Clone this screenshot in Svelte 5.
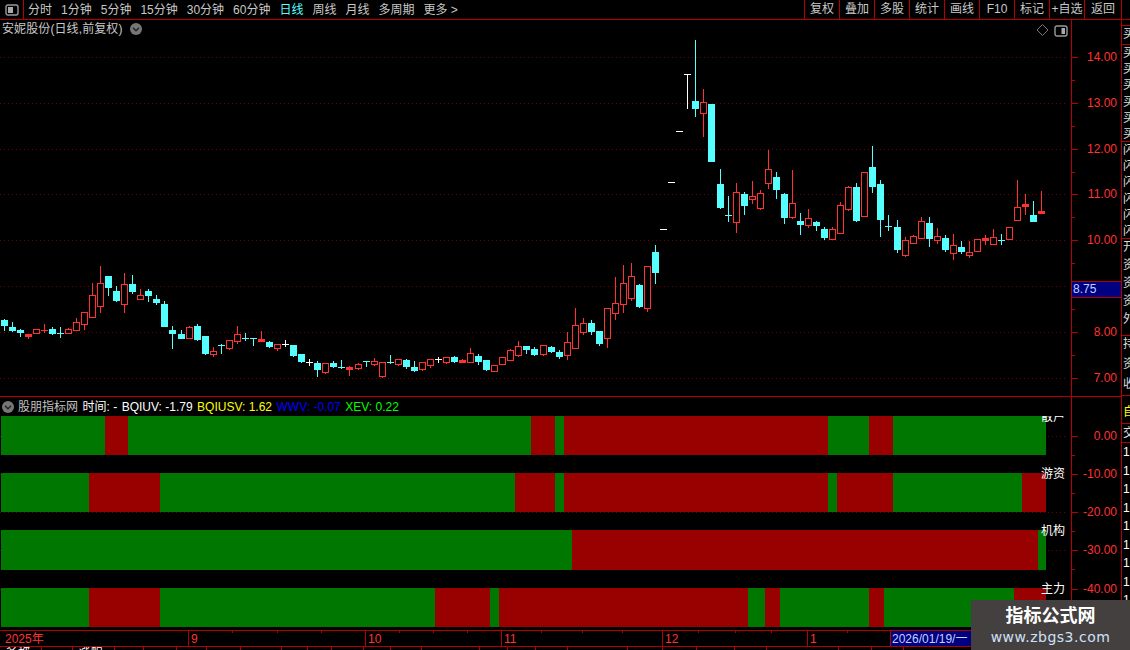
<script>
  const tabs = [
    ['分时', 0], ['1分钟', 0], ['5分钟', 0], ['15分钟', 0], ['30分钟', 0], ['60分钟', 0],
    ['日线', 1], ['周线', 0], ['月线', 0], ['多周期', 0], ['更多 >', 0]
  ];
  const actions = ['复权', '叠加', '多股', '统计', '画线', 'F10', '标记', '+自选', '返回'];

  // [x, colour, wick top, body top, body bottom, wick bottom]
  const candles = [
    [4,'c',319,320,325,330],[12,'c',322,327,330,331],[20,'c',329,330,332,336],[28,'r',334,334,336,338],
    [36,'r',329,329,333,333],[44,'r',324,330,330,332],[52,'c',327,329,333,334],[60,'c',327,333,333,337],
    [68,'r',328,329,333,333],[76,'r',318,322,330,330],[84,'r',312,312,324,329],[92,'r',283,295,317,317],
    [100,'r',266,283,306,312],[108,'c',276,276,287,295],[116,'c',286,291,300,301],[124,'r',273,284,304,312],
    [132,'c',275,284,291,293],[140,'r',289,295,299,299],[148,'c',289,291,295,301],[156,'c',295,299,302,304],
    [164,'c',301,304,326,326],[172,'c',326,330,333,348],[181,'c',330,334,338,338],[189,'r',326,327,338,338],
    [197,'c',324,326,339,340],[205,'c',336,336,353,354],[213,'r',347,351,354,356],[221,'c',344,345,345,353],
    [229,'r',340,340,348,349],[237,'r',326,334,341,343],[245,'c',333,338,338,340],[253,'c',338,338,338,345],
    [261,'r',331,339,341,341],[269,'c',341,342,346,347],[277,'r',344,344,348,350],[285,'w',340,344,344,346],
    [293,'c',345,345,355,356],[301,'c',354,354,361,362],[309,'w',359,362,362,365],[317,'c',361,363,369,376],
    [325,'r',363,363,372,373],[333,'c',361,363,366,367],[341,'c',360,367,367,368],[349,'r',366,367,369,375],
    [358,'r',363,364,368,369],[366,'c',361,361,361,366],[374,'r',358,361,364,365],[382,'r',362,362,376,377],
    [390,'c',355,362,362,363],[398,'r',359,359,364,365],[406,'c',359,360,366,368],[414,'c',361,367,370,371],
    [422,'r',362,362,369,370],[430,'r',359,359,365,367],[438,'w',357,359,359,362],[446,'r',357,357,362,363],
    [454,'c',356,357,361,362],[462,'r',359,360,362,362],[470,'r',348,353,362,362],[478,'c',354,356,361,364],
    [486,'c',360,360,369,370],[494,'r',365,365,371,371],[502,'r',357,357,364,364],[510,'r',349,350,360,360],
    [518,'r',341,346,355,356],[526,'c',346,346,349,353],[534,'c',347,349,354,355],[543,'r',345,345,354,355],
    [551,'c',346,347,351,352],[559,'c',350,352,356,358],[567,'r',332,342,355,359],[575,'r',308,325,348,348],
    [583,'r',318,323,332,334],[591,'c',320,323,331,334],[599,'c',331,331,343,345],[607,'r',308,308,338,347],
    [615,'r',277,303,313,319],[623,'r',265,283,304,312],[631,'r',263,276,298,300],[639,'c',284,285,306,307],
    [647,'r',266,266,308,311],[655,'c',245,252,272,283],[663,'w',229,229,229,229],[671,'w',182,182,182,182],
    [679,'w',131,131,131,131],[687,'w',74,74,74,108],[695,'c',40,101,108,116],[703,'r',89,102,113,136],
    [711,'c',104,104,161,161],[720,'c',169,184,207,208],[728,'c',196,215,215,221],[736,'r',183,192,222,232],
    [744,'c',192,194,205,214],[752,'r',181,196,199,203],[760,'r',190,193,208,209],[768,'r',150,169,183,188],
    [776,'c',172,177,189,198],[784,'c',193,194,217,223],[792,'r',170,203,217,218],[800,'c',213,221,224,234],
    [808,'r',209,218,225,227],[816,'c',221,222,225,230],[824,'c',227,229,237,239],[832,'r',227,229,239,239],
    [840,'r',202,205,233,233],[848,'r',186,187,209,210],[856,'c',183,187,220,221],[864,'r',172,172,216,216],
    [872,'c',146,167,186,192],[880,'c',180,184,219,236],[888,'c',215,226,226,230],[897,'c',220,227,249,252],
    [905,'r',237,240,255,256],[913,'r',235,236,243,243],[921,'r',217,221,238,238],[929,'c',217,223,238,246],
    [937,'r',228,236,240,243],[945,'c',235,238,249,251],[953,'r',234,245,253,259],[961,'c',241,247,251,253],
    [969,'r',241,252,255,257],[977,'r',239,239,251,251],[985,'r',235,238,240,244],[993,'r',229,237,244,244],
    [1001,'c',234,240,240,244],[1009,'r',227,227,239,239],[1017,'r',180,207,220,220],[1025,'r',194,204,206,214],
    [1033,'c',201,215,221,221],[1041,'r',191,211,213,213]
  ];
  const ink = { c: '#55ffff', r: '#ff3232', w: '#ffffff' };

  const upperTicks = [
    [14, 57], [13, 103], [12, 149], [11, 194], [10, 240], [9, 286], [8, 332], [7, 378]
  ].map(([v, y]) => ({ label: v.toFixed(2), y }));
  const lowerTicks = [0, -10, -20, -30, -40].map((v, i) => ({ label: v.toFixed(2), y: 38.25 * i + 38.5 }));

  const flows = [
    [104, 127, 530, 554, 563, 827, 868, 892, 1045],
    [88, 159, 514, 554, 563, 827, 836, 892, 1021, 1045],
    [571, 1037, 1045],
    [88, 159, 434, 489, 498, 747, 764, 779, 868, 883, 1013, 1045]
  ];
  const rows = flows.map((ends) => ends.map((end, i) => ({
    width: end - (i ? ends[i - 1] : 0),
    tone: i % 2 ? 'loss' : 'gain'
  })));
  const tags = [['散户', 417], ['游资', 474], ['机构', 531], ['主力', 589]];

  const months = [['2025年', 188], ['9', 177], ['10', 136], ['11', 161], ['12', 145], ['1', 83]];
  const dateTicks = [232, 277, 321, 399, 433, 467, 541, 582, 622, 698, 735, 771, 847];
  const footerCells = [
    [42, '名称', ''], [31, '', ''], [42, '涨幅', ''], [29, '', ''], [33, '', ''], [30, '', ''], [34, '', ''],
    [41, '', ''], [26, '', ''], [24, '', ''], [32, '', ''], [27, '', ''], [31, '', ''], [58, '', ''],
    [28, '', ''], [28, '', ''], [32, '', ''], [60, '', ''], [35, '', ''], [34, '', ''], [38, '', ''],
    [32, '', ''], [72, '', ''], [33, '', ''], [32, '', ''], [72, '', '']
  ];
  const sideGroups = [
    { h: 20, row: 18, chars: '买' },
    { h: 97, row: 16.2, chars: '买买买买买买' },
    { h: 97, row: 16.2, chars: '闪闪闪闪闪闪' },
    { h: 97, row: 18, chars: '开资资资外' },
    { h: 60, row: 20, chars: '持资收' }
  ];
  const lowerSide = ['1', '1', '1', '1', '1', '1', '1', '1', '1'];
</script>

{#snippet panelIcon(x, y)}
  <svg class="icon" width="14" height="12" viewBox="0 0 14 12" style={`left:${x}px;top:${y}px`}>
    <rect x="1" y="1" width="12" height="10" rx="2" fill="none" stroke="#999" stroke-width="1.4" />
    <rect x="7.5" y="3" width="3.5" height="6" fill="#aaa" />
  </svg>
{/snippet}

{#snippet chevron()}
  <svg class="chev" width="12" height="12" viewBox="0 0 12 12">
    <circle cx="6" cy="6" r="6" fill="#777" />
    <path d="M3 4.8 6 7.8 9 4.8" fill="none" stroke="#222" stroke-width="1.4" />
  </svg>
{/snippet}

<div class="app">
  <header class="toolbar">
    <div class="toggle">
      <svg width="14" height="12" viewBox="0 0 14 12">
        <rect x="1" y="1" width="12" height="10" rx="2" fill="none" stroke="#999" stroke-width="1.4" />
        <rect x="3" y="3" width="5" height="6" fill="#aaa" />
      </svg>
    </div>
    <nav class="tabs">
      {#each tabs as [label, active]}
        <span class:active>{label}</span>
      {/each}
    </nav>
    <div class="actions">
      {#each actions as label}
        <span>{label}</span>
      {/each}
    </div>
  </header>

  <div class="body">
    <div class="panes">
      <section class="pane upper">
        <div class="plot">
          <div class="title">
            <span>安妮股份(日线,前复权)</span>
            {@render chevron()}
          </div>
          <svg class="canvas" width="1071" height="376" viewBox="0 20 1071 376">
            {#each upperTicks as t}
              <line class="grid" x1="0" x2="1068" y1={t.y + 0.5} y2={t.y + 0.5} />
            {/each}
            {#each candles as [x, k, wt, bt, bb, wb]}
              <line x1={x + 0.5} x2={x + 0.5} y1={wt} y2={wb + 1} stroke={ink[k]} />
              {#if bb - bt < 1}
                <rect x={x - 3} y={bt} width="7" height="1" fill={ink[k]} />
              {:else if k === 'c' || bb - bt < 3}
                <rect x={x - 3} y={bt} width="7" height={bb - bt + 1} fill={ink[k]} />
              {:else}
                <rect x={x - 2.5} y={bt + 0.5} width="6" height={bb - bt} fill="#000" stroke={ink[k]} />
              {/if}
            {/each}
            <path class="diamond" d="M1042.5 24.5 1048 30 1042.5 35.5 1037 30Z" />
          </svg>
          {@render panelIcon(1054, 5)}
        </div>
        <div class="axis">
          {#each upperTicks as t, i}
            <i class="tick" style={`top:${t.y - 20}px`}></i>
            {#if i < upperTicks.length - 1}
              <i class="tick minor" style={`top:${t.y + 23 - 20}px`}></i>
            {/if}
            {#if t.label !== '9.00'}
              <b class="num" style={`top:${t.y - 28}px`}>{t.label}</b>
            {/if}
          {/each}
          <div class="last">8.75</div>
        </div>
      </section>

      <section class="pane lower">
        <div class="plot">
          <svg class="canvas" width="1071" height="233" viewBox="0 0 1071 233">
            {#each lowerTicks as t}
              <line class="grid" x1="0" x2="1068" y1={t.y + 0.5} y2={t.y + 0.5} />
            {/each}
          </svg>
          <div class="rows">
            {#each rows as row}
              <div class="row">
                {#each row as seg}
                  <span class={seg.tone} style={`width:${seg.width}px`}></span>
                {/each}
              </div>
            {/each}
          </div>
          {#each tags as [name, y]}
            <span class="tag" style={`top:${y - 397 - 8}px`}>{name}</span>
          {/each}
          <div class="legend">
            {@render chevron()}
            <span class="src">股朋指标网</span>
            <span class="time">时间: -</span>
            <span class="white">BQIUV: -1.79</span>
            <span class="yellow">BQIUSV: 1.62</span>
            <span class="blue">WWV: -0.07</span>
            <span class="lime">XEV: 0.22</span>
          </div>
        </div>
        <div class="axis">
          {#each lowerTicks as t}
            <i class="tick" style={`top:${t.y}px`}></i>
            <i class="tick minor" style={`top:${t.y + 19}px`}></i>
            <b class="num" style={`top:${t.y - 8}px`}>{t.label}</b>
          {/each}
        </div>
      </section>

      <div class="dates">
        {#each months as [label, w]}
          <span class="month" style={`width:${w}px`}>{label}</span>
        {/each}
        <span class="cursor">2026/01/19/一</span>
        {#each dateTicks as x}
          <i class="date-tick" style={`left:${x}px`}></i>
        {/each}
      </div>
    </div>

    <aside class="side">
      <div class="side-top">
        {#each sideGroups as g}
          <div class="group" style={`height:${g.h}px`}>
            {#each g.chars.split('') as c}<span style={`height:${g.row}px`}>{c}</span>{/each}
          </div>
        {/each}
      </div>
      <div class="side-low">
        <div class="auto">自</div>
        <div class="cross">交</div>
        {#each lowerSide as c}<span>{c}</span>{/each}
      </div>
    </aside>
  </div>

  <footer class="foot">
    {#each footerCells as [w, label]}
      <span style={`width:${w}px`}>{label}</span>
    {/each}
  </footer>

  <div class="stamp">
    <strong>指标公式网</strong>
    <em>www.zbgs3.com</em>
  </div>
</div>

<style>
  :global(body) {
    margin: 0;
    background: #000;
  }
  .app {
    position: relative;
    width: 1130px;
    height: 650px;
    overflow: hidden;
    background: #000;
    color: #c8c8c8;
    font: 12px/16px "Liberation Sans", "Noto Sans CJK SC", sans-serif;
  }
  .toolbar {
    display: flex;
    height: 19px;
    border-bottom: 1px solid #b40000;
  }
  .toggle {
    display: flex;
    align-items: center;
    justify-content: center;
    width: 23px;
    border-right: 1px solid #b40000;
  }
  .tabs {
    display: flex;
    flex: 1;
    gap: 9px;
    padding-left: 4px;
    align-items: center;
  }
  .tabs .active {
    color: #55ffff;
  }
  .actions {
    display: flex;
    margin-right: 8px;
    border-left: 1px solid #b40000;
  }
  .actions span {
    width: 34px;
    border-right: 1px solid #b40000;
    text-align: center;
    line-height: 19px;
    white-space: nowrap;
  }
  .actions span:last-child {
    width: 36px;
  }
  .body {
    display: flex;
    height: 627px;
  }
  .panes {
    width: 1121px;
    border-right: 1px solid #b40000;
  }
  .pane {
    display: flex;
  }
  .upper {
    height: 376px;
    border-bottom: 1px solid #b40000;
  }
  .lower {
    height: 233px;
  }
  .plot {
    position: relative;
    width: 1071px;
    border-right: 1px solid #b40000;
  }
  .canvas {
    position: absolute;
    left: 0;
    top: 0;
    shape-rendering: crispEdges;
  }
  .grid {
    stroke: #700000;
    stroke-dasharray: 1 3;
  }
  .diamond {
    fill: none;
    stroke: #777;
    shape-rendering: auto;
  }
  .title {
    position: absolute;
    z-index: 1;
    left: 2px;
    top: 1px;
    display: flex;
    align-items: center;
    gap: 7px;
  }
  .title span {
    letter-spacing: 0.1px;
  }
  .icon {
    position: absolute;
  }
  .chev {
    flex: none;
  }
  .axis {
    position: relative;
    flex: 1;
    overflow: hidden;
    color: #ff3232;
  }
  .tick {
    position: absolute;
    left: 0;
    width: 6px;
    height: 1px;
    background: #b40000;
  }
  .tick.minor {
    width: 3px;
  }
  .num {
    position: absolute;
    right: 4px;
    font-weight: 400;
  }
  .last {
    position: absolute;
    left: 0;
    right: 0;
    top: 261px;
    height: 15px;
    padding-left: 1px;
    line-height: 15px;
    color: #c0d0ff;
    background: #000080;
    border-top: 1px solid #b40000;
    border-bottom: 1px solid #b40000;
  }
  .rows {
    position: absolute;
    left: 1px;
    top: 19px;
    display: flex;
    flex-direction: column;
    gap: 18px;
  }
  .row {
    display: flex;
    height: 39px;
  }
  .row:nth-child(3) {
    height: 40px;
  }
  .gain {
    background: #007700;
  }
  .loss {
    background: #990000;
  }
  .tag {
    position: absolute;
    left: 1041px;
    color: #fff;
    white-space: nowrap;
  }
  .legend {
    position: absolute;
    left: 2px;
    top: 0;
    display: flex;
    align-items: center;
    gap: 4.5px;
    width: 1066px;
    height: 19px;
    background: #000;
    white-space: nowrap;
  }
  .src {
    margin-left: -0.5px;
    color: #c0c0c0;
  }
  .time,
  .white {
    color: #fff;
  }
  .yellow {
    color: #ffff00;
  }
  .blue {
    color: #0000ff;
  }
  .lime {
    color: #00ff00;
  }
  .dates {
    position: relative;
    display: flex;
    height: 15px;
    border-top: 1px solid #b40000;
    border-bottom: 1px solid #b40000;
    color: #ff3232;
    line-height: 16px;
  }
  .month {
    box-sizing: border-box;
    padding-left: 2px;
    border-left: 1px solid #b40000;
    white-space: nowrap;
  }
  .month:first-child {
    padding-left: 5px;
    border-left: 0;
  }
  .date-tick {
    position: absolute;
    top: 0;
    width: 1px;
    height: 2px;
    background: #b40000;
  }
  .cursor {
    width: 80px;
    padding-left: 1px;
    color: #c0d0ff;
    background: #000080;
    border-left: 1px solid #b40000;
    border-right: 1px solid #b40000;
    white-space: nowrap;
    overflow: hidden;
  }
  .side {
    flex: 1;
    overflow: hidden;
    color: #ddd;
  }
  .side-top {
    height: 376px;
    margin-bottom: 1px;
  }
  .group {
    overflow: hidden;
    box-sizing: border-box;
    border-bottom: 1px solid #b40000;
  }
  .group:first-child {
    margin-top: 5px;
    border-top: 1px solid #b40000;
  }
  .group span,
  .side-low span {
    display: block;
    width: 12px;
    padding-left: 1px;
    line-height: 16px;
  }
  .side-low span {
    height: 18.5px;
    line-height: 18px;
    color: #fff;
  }
  .auto {
    height: 21px;
    line-height: 20px;
    padding-left: 1px;
    color: #ffff00;
    border-bottom: 1px solid #b40000;
  }
  .cross {
    height: 18px;
    line-height: 18px;
    padding-left: 1px;
    border-bottom: 1px solid #b40000;
  }
  .foot {
    display: flex;
    height: 3px;
    overflow: hidden;
  }
  .foot span {
    flex: none;
    box-sizing: border-box;
    padding-left: 6px;
    overflow: hidden;
    color: #fff;
    line-height: 11px;
    border-right: 1px solid #b40000;
  }
  .stamp {
    position: absolute;
    left: 971px;
    top: 600px;
    display: flex;
    flex-direction: column;
    align-items: center;
    width: 159px;
    height: 50px;
    background: #444040;
  }
  .stamp strong {
    margin-top: 4px;
    color: #fff;
    font-size: 18px;
    line-height: 24px;
  }
  .stamp em {
    color: #cfe0f8;
    font: 14px/18px "DejaVu Sans", sans-serif;
    letter-spacing: 0.5px;
  }
</style>
